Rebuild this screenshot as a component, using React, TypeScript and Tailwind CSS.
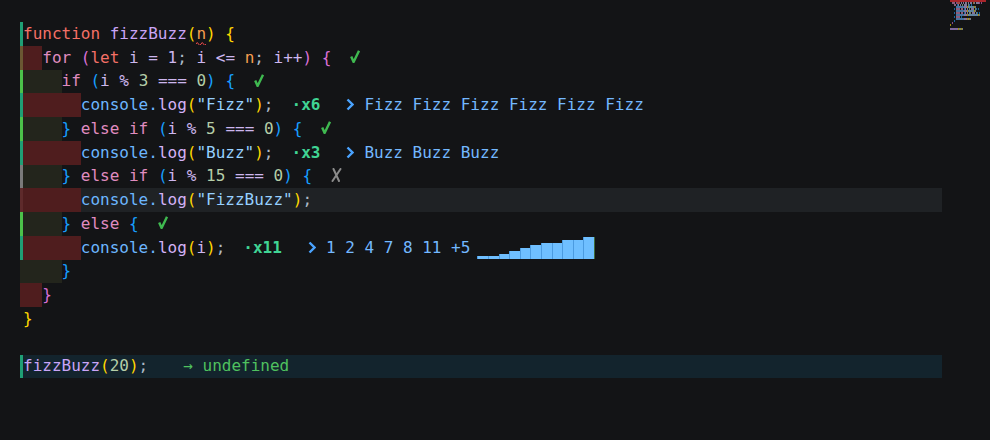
import React from "react";

type Tone = { t: string; b: string };

const P: Record<string, Tone> = {
  kw: { t: "text-[#f47067]", b: "bg-[#f47067]" },
  ctl: { t: "text-[#e08cc0]", b: "bg-[#e08cc0]" },
  fn: { t: "text-[#c9a5f7]", b: "bg-[#c9a5f7]" },
  op: { t: "text-[#cdb6ee]", b: "bg-[#cdb6ee]" },
  num: { t: "text-[#b5cea8]", b: "bg-[#b5cea8]" },
  param: { t: "text-[#f69d50]", b: "bg-[#f69d50]" },
  obj: { t: "text-[#6cb6ff]", b: "bg-[#6cb6ff]" },
  method: { t: "text-[#d4b2f8]", b: "bg-[#d4b2f8]" },
  str: { t: "text-[#96d0ff]", b: "bg-[#96d0ff]" },
  punc: { t: "text-[#adbac7]", b: "bg-[#adbac7]" },
  b1: { t: "text-[#ffd700]", b: "bg-[#ffd700]" },
  b2: { t: "text-[#da70d6]", b: "bg-[#da70d6]" },
  b3: { t: "text-[#179fff]", b: "bg-[#179fff]" },
};

type Tok = [string, keyof typeof P | "sp"];

const sp: Tok = [" ", "sp"];
const log = (arg: Tok[]): Tok[] => [
  ["console", "obj"],
  [".", "obj"],
  ["log", "method"],
  ["(", "b1"],
  ...arg,
  [")", "b1"],
  [";", "punc"],
];

type Row = {
  bar: string;
  block?: string;
  indent: 0 | 1 | 2 | 3;
  toks: Tok[];
  deco?: React.ReactNode;
  bg?: string;
  squiggle?: boolean;
};

const RED = "bg-[#4f1d1e]";
const OLIVE = "bg-[#23251c]";
const TEAL = "bg-[#1f9f75]";
const GREEN = "bg-[#4cc14a]";

// check / cross / chevron drawn so the strokes match the reference glyphs
const Check = () => (
  <svg className="ml-[19px] inline-block -mt-[3px] align-middle" width="10" height="13" viewBox="0 0 10 13">
    <path d="M1.2 6.5 L3.6 12 L9 0.8" fill="none" stroke="#3fb950" strokeWidth="2.4" strokeLinejoin="round" />
  </svg>
);

const Cross = () => (
  <svg className="ml-[19px] inline-block -mt-[3px] align-middle" width="11" height="14" viewBox="0 0 11 14">
    <path d="M2.5 1 L8 13 M9.5 1 L1.5 13" fill="none" stroke="#8a8a8a" strokeWidth="2" strokeLinecap="round" />
  </svg>
);

const Count = ({ n }: { n: string }) => (
  <span className="ml-[18px] font-bold text-[#40d494]">{"·x" + n}</span>
);

const Out = ({ text }: { text: string }) => (
  <>
    <svg className="ml-[26px] inline-block -mt-[2px] align-middle" width="8" height="13" viewBox="0 0 8 13">
      <path d="M1.5 1.5 L6.5 6.5 L1.5 11.5" fill="none" stroke="#4aa3ff" strokeWidth="2.4" />
    </svg>
    <span className="ml-[10px] text-[#73b8ff]">{text}</span>
  </>
);

const bars = [3, 3, 5, 8, 11, 14, 16, 16, 19, 19, 22];

const Spark = () => (
  <span className="ml-[7px] inline-flex h-[22px] items-end align-middle">
    {bars.map((h, i) => (
      <span
        key={i}
        className="w-[10.6px] border-l border-[#4b9be0] bg-[#6fbfff]"
        style={{ height: h }}
      />
    ))}
    <span className="h-[22px] w-px bg-[#3d6b3a]" />
  </span>
);

const rows: Row[] = [
  {
    bar: TEAL,
    indent: 0,
    squiggle: true,
    toks: [["function", "kw"], sp, ["fizzBuzz", "fn"], ["(", "b1"], ["n", "param"], [")", "b1"], sp, ["{", "b1"]],
  },
  {
    bar: "bg-[#6b5733]",
    block: RED,
    indent: 1,
    toks: [
      ["for", "ctl"], sp, ["(", "b2"], ["let", "kw"], sp, ["i", "op"], sp, ["=", "op"], sp, ["1", "op"], [";", "punc"], sp,
      ["i", "op"], sp, ["<=", "op"], sp, ["n", "param"], [";", "punc"], sp, ["i", "op"], ["++", "op"], [")", "b2"], sp, ["{", "b2"],
    ],
    deco: <Check />,
  },
  {
    bar: GREEN,
    block: OLIVE,
    indent: 2,
    toks: [["if", "ctl"], sp, ["(", "b3"], ["i", "op"], sp, ["%", "op"], sp, ["3", "num"], sp, ["===", "op"], sp, ["0", "num"], [")", "b3"], sp, ["{", "b3"]],
    deco: <Check />,
  },
  {
    bar: TEAL,
    block: RED,
    indent: 3,
    toks: log([['"Fizz"', "str"]]),
    deco: (
      <>
        <Count n="6" />
        <Out text="Fizz Fizz Fizz Fizz Fizz Fizz" />
      </>
    ),
  },
  {
    bar: GREEN,
    block: OLIVE,
    indent: 2,
    toks: [["}", "b3"], sp, ["else", "ctl"], sp, ["if", "ctl"], sp, ["(", "b3"], ["i", "op"], sp, ["%", "op"], sp, ["5", "num"], sp, ["===", "op"], sp, ["0", "num"], [")", "b3"], sp, ["{", "b3"]],
    deco: <Check />,
  },
  {
    bar: TEAL,
    block: RED,
    indent: 3,
    toks: log([['"Buzz"', "str"]]),
    deco: (
      <>
        <Count n="3" />
        <Out text="Buzz Buzz Buzz" />
      </>
    ),
  },
  {
    bar: "bg-[#7a7a7a]",
    block: OLIVE,
    indent: 2,
    toks: [["}", "b3"], sp, ["else", "ctl"], sp, ["if", "ctl"], sp, ["(", "b3"], ["i", "op"], sp, ["%", "op"], sp, ["15", "num"], sp, ["===", "op"], sp, ["0", "num"], [")", "b3"], sp, ["{", "b3"]],
    deco: <Cross />,
  },
  {
    bar: "bg-[#5e2a2b]",
    block: RED,
    indent: 3,
    bg: "bg-[#1f2225]",
    toks: log([['"FizzBuzz"', "str"]]),
  },
  {
    bar: GREEN,
    block: OLIVE,
    indent: 2,
    toks: [["}", "b3"], sp, ["else", "ctl"], sp, ["{", "b3"]],
    deco: <Check />,
  },
  {
    bar: TEAL,
    block: RED,
    indent: 3,
    toks: log([["i", "op"]]),
    deco: (
      <>
        <Count n="11" />
        <Out text="1 2 4 7 8 11 +5" />
        <Spark />
      </>
    ),
  },
  { bar: OLIVE, block: OLIVE, indent: 2, toks: [["}", "b3"]] },
  { bar: RED, block: RED, indent: 1, toks: [["}", "b2"]] },
  { bar: "", indent: 0, toks: [["}", "b1"]] },
  { bar: "", indent: 0, toks: [] },
  {
    bar: TEAL,
    indent: 0,
    bg: "bg-[#13242d]",
    toks: [["fizzBuzz", "fn"], ["(", "b1"], ["20", "num"], [")", "b1"], [";", "punc"]],
    deco: <span className="ml-[35px] text-[#4fc15f]">→ undefined</span>,
  },
];

const indentW = ["w-0", "w-[2ch]", "w-[4ch]", "w-[6ch]"];

const Squiggle = () => (
  <svg className="absolute -bottom-[2px] left-0" width="10" height="4" viewBox="0 0 10 4">
    <path d="M0 3 Q1.25 0 2.5 3 T5 3 T7.5 3 T10 3" fill="none" stroke="#f14c4c" strokeWidth="1" />
  </svg>
);

const CodeLine = ({ row }: { row: Row }) => (
  <div className="flex h-[23.75px]">
    <div className={`w-[3px] shrink-0 ${row.bar}`} />
    <div className={`flex flex-1 items-center ${row.bg ?? ""}`}>
      {row.indent > 0 && <div className={`h-full shrink-0 ${indentW[row.indent]} ${row.block ?? ""}`} />}
      <span className="whitespace-pre">
        {row.toks.map(([text, tone], i) =>
          tone === "sp" ? (
            <span key={i}> </span>
          ) : row.squiggle && tone === "param" ? (
            <span key={i} className={`relative ${P[tone].t}`}>
              {text}
              <Squiggle />
            </span>
          ) : (
            <span key={i} className={P[tone].t}>
              {text}
            </span>
          )
        )}
        {row.deco}
      </span>
    </div>
  </div>
);

const MiniRow = ({ row }: { row: Row }) => {
  const chars: { tone: string }[] = [];
  for (let i = 0; i < row.indent * 2; i++) chars.push({ tone: "sp" });
  row.toks.forEach(([text, tone]) => text.split("").forEach(() => chars.push({ tone })));
  return (
    <div className="flex h-[2px]">
      {chars.map((ch, i) => (
        <div key={i} className={`h-[2px] w-px opacity-60 ${ch.tone === "sp" ? "" : P[ch.tone].b}`} />
      ))}
    </div>
  );
};

export default function App() {
  return (
    <div className="flex h-[440px] w-[990px] overflow-hidden bg-[#131416] font-['DejaVu_Sans_Mono',monospace] text-[16px] text-[#adbac7]">
      <div className="w-[942px] shrink-0 pl-[20px] pt-[22px]">
        {rows.map((r, i) => (
          <CodeLine key={i} row={r} />
        ))}
      </div>
      <div className="flex flex-1 flex-col pl-[8px]">
        <div className="h-[2px] w-[36px] bg-[#a8262b]" />
        {rows.slice(1).map((r, i) => (
          <MiniRow key={i} row={r} />
        ))}
      </div>
    </div>
  );
}
